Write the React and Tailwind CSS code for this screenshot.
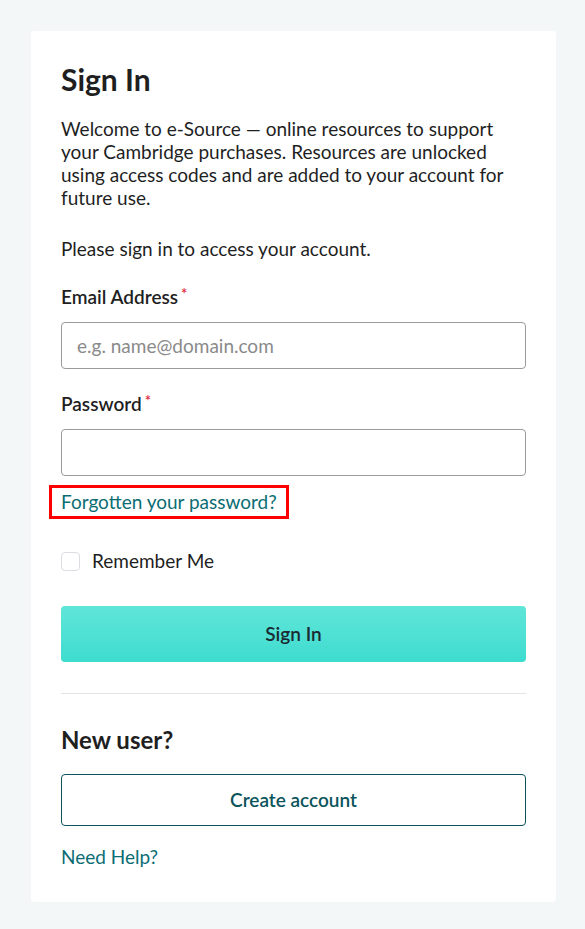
import React from 'react';

const font = { fontFamily: 'Lato, "Liberation Sans", sans-serif' };

const Required = () => <span className="text-[#e0243a] text-[15px] align-top relative -top-[4px] ml-[3px]">*</span>;

const App = () => (
  <div className="min-h-screen bg-[#f4f7f8] pl-[31px] pr-[29px] pt-[31px] pb-[28px]" style={font}>
    <div className="bg-white rounded-[4px] px-[30px] pt-[29px] pb-[33px] text-[#1f1f1f]">
      <h1 className="text-[30px] font-bold leading-[38px]">Sign In</h1>
      <p className="mt-[19px] text-[19px] leading-[23px]">
        Welcome to e-Source — online resources to support your Cambridge purchases. Resources are unlocked using access codes and are added to your account for future use.
      </p>
      <p className="mt-[28px] text-[19px] leading-[23px]">Please sign in to access your account.</p>

      <form className="mt-[25px]">
        <label className="block text-[19px] font-semibold leading-[24px]">
          Email Address<Required />
        </label>
        <input
          type="email"
          placeholder="e.g. name@domain.com"
          className="mt-[13px] block w-full h-[47px] rounded-[4px] border border-[#9a9a9a] px-[15px] text-[19px] placeholder:text-[#8a8a8a] outline-none"
        />

        <label className="mt-[23px] block text-[19px] font-semibold leading-[24px]">
          Password<Required />
        </label>
        <input
          type="password"
          className="mt-[13px] block w-full h-[47px] rounded-[4px] border border-[#9a9a9a] px-[15px] text-[19px] outline-none"
        />

        {/* highlighted link */}
        <div className="mt-[9px] -ml-[12px] w-fit border-[3px] border-[#ff0000] px-[9px] pt-[2px] pb-[2px]">
          <a href="#" className="block text-[19px] leading-[24px] text-[#0b6d74]">Forgotten your password?</a>
        </div>

        <label className="mt-[30px] flex items-center gap-[12px] text-[19px] leading-[24px]">
          <span className="w-[19px] h-[19px] rounded-[4px] border border-[#dcdde3] bg-white" />
          Remember Me
        </label>

        <button
          type="button"
          className="mt-[33px] w-full h-[56px] rounded-[4px] bg-gradient-to-b from-[#5ee6d8] to-[#3ddcd0] text-[19px] font-semibold text-[#1a2b33]"
        >
          Sign In
        </button>
      </form>

      <hr className="mt-[31px] border-0 border-t border-[#e3e3e3]" />

      <h2 className="mt-[30px] text-[24px] font-bold leading-[32px]">New user?</h2>
      <button
        type="button"
        className="mt-[18px] w-full h-[52px] rounded-[4px] border border-[#0b545c] bg-white text-[19px] font-semibold text-[#0b545c]"
      >
        Create account
      </button>
      <a href="#" className="mt-[19px] block text-[19px] leading-[24px] text-[#0b6d74]">Need Help?</a>
    </div>
  </div>
);

export default App;
